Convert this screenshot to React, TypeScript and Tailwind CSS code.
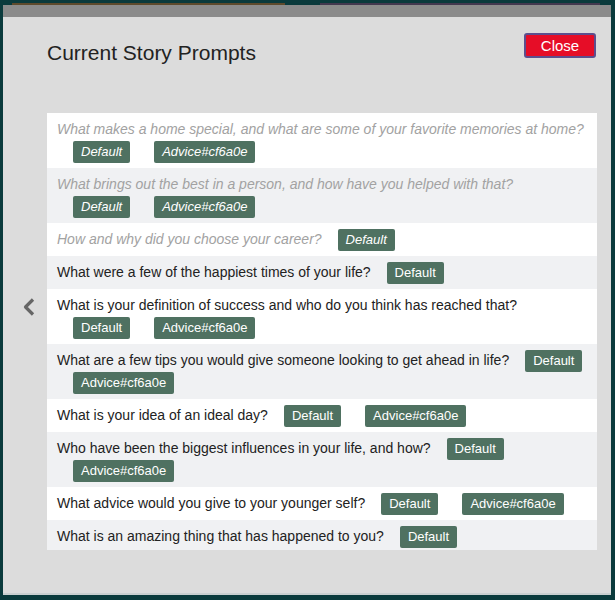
import React from "react";

type Prompt = {
  text: string;
  tags: string[];
  inactive?: boolean;
};

const PROMPTS: Prompt[] = [
  {
    text: "What makes a home special, and what are some of your favorite memories at home?",
    tags: ["Default", "Advice#cf6a0e"],
    inactive: true,
  },
  {
    text: "What brings out the best in a person, and how have you helped with that?",
    tags: ["Default", "Advice#cf6a0e"],
    inactive: true,
  },
  { text: "How and why did you choose your career?", tags: ["Default"], inactive: true },
  { text: "What were a few of the happiest times of your life?", tags: ["Default"] },
  {
    text: "What is your definition of success and who do you think has reached that?",
    tags: ["Default", "Advice#cf6a0e"],
  },
  {
    text: "What are a few tips you would give someone looking to get ahead in life?",
    tags: ["Default", "Advice#cf6a0e"],
  },
  { text: "What is your idea of an ideal day?", tags: ["Default", "Advice#cf6a0e"] },
  {
    text: "Who have been the biggest influences in your life, and how?",
    tags: ["Default", "Advice#cf6a0e"],
  },
  { text: "What advice would you give to your younger self?", tags: ["Default", "Advice#cf6a0e"] },
  { text: "What is an amazing thing that has happened to you?", tags: ["Default"] },
];

const App = () => {
  return (
    <div className="relative h-[600px] w-[615px] overflow-hidden bg-[#0a3a3c] font-['Liberation_Sans',Arial,sans-serif]">
      {/* whatever sits behind the modal */}
      <div className="flex h-[5px] items-end">
        <div className="ml-[12px] h-[2px] w-[273px] bg-[#5e4a2c]" />
        <div className="ml-[35px] h-[2px] w-[280px] bg-[#43384f]" />
      </div>

      <div className="ml-[3px] flex h-[590px] w-[608px] flex-col">
        <div className="h-[12px] bg-[#8b8b8b]" />
        <div className="relative flex-1 border-b-2 border-[#c9cfd0] bg-[#dcdcdc] pl-[44px] pr-[14px] pt-4">
          <div className="flex items-start justify-between">
            <h2 className="mt-[6px] text-[21px] leading-[28px] text-[#222]">Current Story Prompts</h2>
            <button className="mr-[1px] h-[25px] w-[72px] rounded-[3px] border-2 border-[#5d4f8e] bg-[#e60d27] text-[15px] leading-[21px] text-white">
              Close
            </button>
          </div>

          <div className="mt-[46px] h-[437px] overflow-hidden">
            {PROMPTS.map((p, i) => (
              <div
                key={p.text}
                className={`flex flex-wrap items-center pl-[10px] pr-[4px] py-[5px] text-[14px] ${
                  i % 2 === 0 ? "bg-white" : "bg-[#f0f1f3]"
                } ${p.inactive ? "italic text-[#a2a2a2]" : "text-[#222]"}`}
              >
                <span className="leading-[23px]">{p.text}</span>
                {p.tags.map((t) => (
                  <span
                    key={t}
                    className="ml-4 mr-2 h-[22px] rounded-[2px] bg-[#4f7161] px-2 text-[13px] leading-[22px] text-white"
                  >
                    {t}
                  </span>
                ))}
              </div>
            ))}
          </div>

          <svg
            className="absolute left-[20px] top-[281px]"
            width="12"
            height="18"
            viewBox="0 0 12 18"
            fill="none"
          >
            <path d="M10 1.5 L2.5 9 L10 16.5" stroke="#666" strokeWidth="3.2" strokeLinejoin="round" />
          </svg>
        </div>
      </div>
    </div>
  );
};

export default App;
